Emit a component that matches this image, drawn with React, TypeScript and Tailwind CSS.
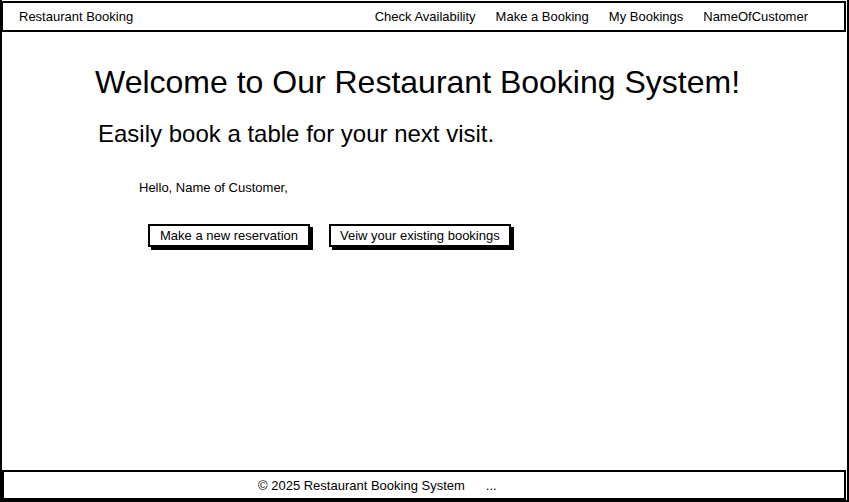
import React from "react";

export default function App() {
  const font = { fontFamily: '"Liberation Sans", Arial, sans-serif' };
  return (
    <div
      className="w-[849px] h-[502px] bg-white text-black flex flex-col border-x-2 border-b-2 border-black overflow-hidden"
      style={font}
    >
      <header className="h-[31px] mt-[1px] mr-[1px] -ml-[1px] border-2 border-black flex items-center justify-between pl-[16px] pr-[36px] text-[13px] shrink-0">
        <span>Restaurant Booking</span>
        <nav className="flex items-center gap-[20px]">
          <span>Check Availability</span>
          <span>Make a Booking</span>
          <span>My Bookings</span>
          <span>NameOfCustomer</span>
        </nav>
      </header>
      <main className="flex-1 flex flex-col">
        <h1 className="mt-[31px] ml-[93px] text-[32px] leading-[38px] whitespace-nowrap">
          Welcome to Our Restaurant Booking System!
        </h1>
        <h2 className="mt-[19px] ml-[96px] text-[24px] leading-[28px] whitespace-nowrap">
          Easily book a table for your next visit.
        </h2>
        <p className="mt-[32px] ml-[137px] text-[13px] leading-[16px]">Hello, Name of Customer,</p>
        <div className="mt-[28px] ml-[146px] flex gap-[19px]">
          <button className="h-[23px] px-[10px] border-2 border-black bg-white text-[13px] shadow-[3px_3px_0_0_#000] flex items-center">
            Make a new reservation
          </button>
          <button className="h-[23px] px-[9px] border-2 border-black bg-white text-[13px] shadow-[3px_3px_0_0_#000] flex items-center">
            Veiw your existing bookings
          </button>
        </div>
      </main>
      <footer className="h-[30px] mr-[1px] border-2 border-black flex items-center pt-[2px] text-[13px] shrink-0">
        <span className="ml-[254px]">© 2025 Restaurant Booking System</span>
        <span className="ml-[21px]">...</span>
      </footer>
    </div>
  );
}
